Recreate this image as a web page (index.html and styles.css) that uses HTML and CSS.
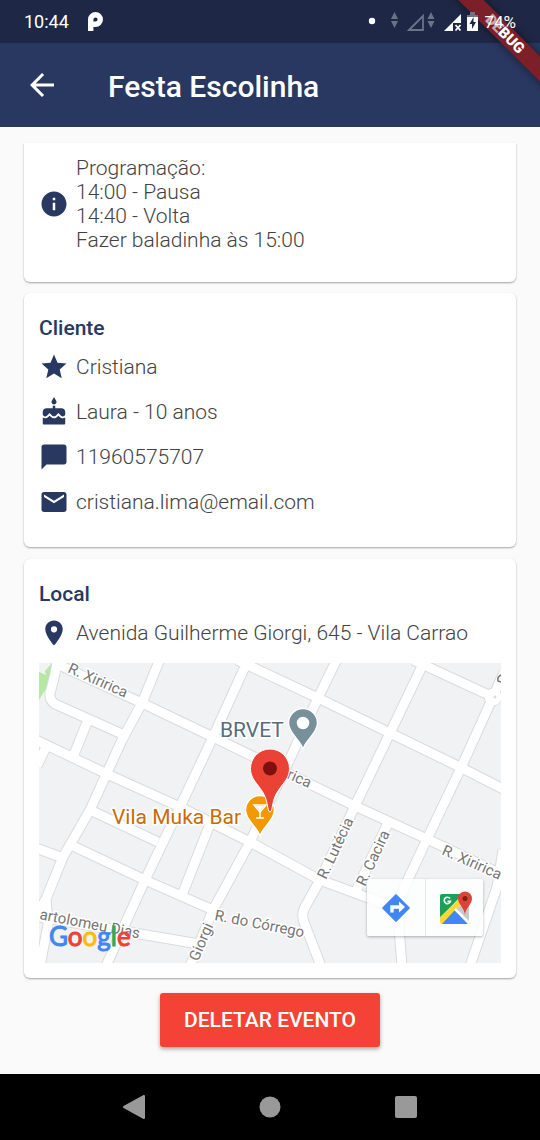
FILE: index.html
```html
<!DOCTYPE html>
<html lang="pt-BR">
<head>
<meta charset="utf-8">
<meta name="viewport" content="width=device-width, initial-scale=1">
<title>Festa Escolinha</title>
<link rel="stylesheet" href="styles.css">
</head>
<body>
<div class="debug-banner"><span class="debug-label"><span class="debug-dim">DE</span>BUG</span></div>
<div class="status-bar">
  <span class="clock">10:44</span>
  <svg class="app-glyph" width="15" height="19" viewBox="0 0 15 19"><path d="M2.700 19V7.500A4.800 4.800 0 1 1 7.500 12.300H5" fill="none" stroke="#fff" stroke-width="5.400"/></svg>
  <span class="status-icons">
    <svg width="110" height="20" viewBox="0 0 110 20">
      <circle cx="4" cy="9" r="3.200" fill="#fff"/>
      <g fill="#6b7389"><path d="M26.500 0l3.500 7h-7zM26.500 16l3.500-7h-7zM63 0l3.500 7h-7zM63 16l3.500-7h-7z"/></g>
      <path d="M41 18L55 4v14z" fill="none" stroke="#6b7389" stroke-width="1.800"/>
      <path d="M76 19L93 2v9h-8v8z" fill="#fff"/>
      <path d="M87.500 13l5 5.500M92.500 13l-5 5.500" stroke="#fff" stroke-width="1.800"/>
      <path d="M102 0h5v3h3v3H99V3h3z" fill="#6b7389"/>
      <path d="M99 5h11v14H99z" fill="#fff"/><path d="M105.500 5l-4 7h2.500v5l4-7h-2.500z" fill="#1e2846"/>
    </svg>
    <span class="battery">74%</span>
  </span>
</div>
<header class="app-bar">
  <button class="back" aria-label="Voltar"><svg width="36" height="36" viewBox="0 0 24 24"><path fill="#fff" d="M20 11H7.830l5.590-5.590L12 4l-8 8 8 8 1.410-1.410L7.830 13H20v-2z"/></svg></button>
  <h1 class="title">Festa Escolinha</h1>
</header>
<main class="content">
  <section class="card card-cut">
    <div class="row">
      <svg class="icon" viewBox="0 0 24 24"><path d="M12 2C6.480 2 2 6.480 2 12s4.480 10 10 10 10-4.480 10-10S17.520 2 12 2zm1 15h-2v-6h2v6zm0-8h-2V7h2v2z"/></svg>
      <p class="text">Programação:<br>14:00 - Pausa<br>14:40 - Volta<br>Fazer baladinha às 15:00</p>
    </div>
  </section>
  <section class="card">
    <h2 class="heading">Cliente</h2>
    <div class="row">
      <svg class="icon" viewBox="0 0 24 24"><path d="M12 17.270L18.180 21l-1.640-7.030L22 9.240l-7.190-.61L12 2 9.190 8.630 2 9.240l5.460 4.730L5.820 21z"/></svg>
      <p class="text">Cristiana</p>
    </div>
    <div class="row">
      <svg class="icon" viewBox="0 0 24 24"><path d="M12 6c1.110 0 2-.9 2-2 0-.38-.1-.73-.29-1.030L12 0l-1.710 2.970c-.19.3-.29.65-.29 1.030 0 1.100.9 2 2 2zm4.600 9.990l-1.070-1.070-1.080 1.070c-1.300 1.300-3.580 1.310-4.890 0l-1.070-1.070-1.090 1.070C6.750 16.640 5.880 17 4.960 17c-.73 0-1.400-.23-1.960-.61V21c0 .55.45 1 1 1h16c.55 0 1-.45 1-1v-4.610c-.56.38-1.230.61-1.960.61-.92 0-1.790-.36-2.440-1.010zM18 9h-5V7h-2v2H6c-1.660 0-3 1.340-3 3v1.540c0 1.080.88 1.960 1.960 1.960.52 0 1.020-.2 1.380-.57l2.140-2.130 2.130 2.130c.74.74 2.030.74 2.770 0l2.140-2.130 2.130 2.130c.37.37.86.57 1.380.57 1.080 0 1.960-.88 1.960-1.960V12C21 10.340 19.660 9 18 9z"/></svg>
      <p class="text">Laura - 10 anos</p>
    </div>
    <div class="row">
      <svg class="icon" viewBox="0 0 24 24"><path d="M20 2H4c-1.100 0-1.990.9-1.990 2L2 22l4-4h14c1.100 0 2-.9 2-2V4c0-1.100-.9-2-2-2z"/></svg>
      <p class="text">11960575707</p>
    </div>
    <div class="row">
      <svg class="icon" viewBox="0 0 24 24"><path d="M20 4H4c-1.100 0-1.990.9-1.990 2L2 18c0 1.100.9 2 2 2h16c1.100 0 2-.9 2-2V6c0-1.100-.9-2-2-2zm0 4l-8 5-8-5V6l8 5 8-5v2z"/></svg>
      <p class="text">cristiana.lima@email.com</p>
    </div>
  </section>
  <section class="card">
    <h2 class="heading">Local</h2>
    <div class="row">
      <svg class="icon" viewBox="0 0 24 24"><path d="M12 2C8.130 2 5 5.130 5 9c0 5.250 7 13 7 13s7-7.750 7-13c0-3.870-3.130-7-7-7zm0 9.500a2.500 2.500 0 0 1 0-5 2.500 2.500 0 0 1 0 5z"/></svg>
      <p class="text">Avenida Guilherme Giorgi, 645 - Vila Carrao</p>
    </div>
    <div class="map">
      <svg class="map-canvas" viewBox="0 0 462 300" preserveAspectRatio="xMidYMid slice">
        <defs>
          <g id="roads">
            <path d="M18 -3Q17 10 11 30Q10 37 16 41L83 71"/>
            <path d="M20 2L103 40L174 74L316 143L388 176L464 212"/>
            <path d="M49 57L34 94M8 82L-2 103"/>
            <path d="M-3 77L68 111L141 144L211 179L281 217L354 244"/>
            <path d="M198 -3L279 35L351 70L423 105L464 126"/>
            <path d="M374 -3L454 34L465 9"/>
            <path d="M454 34L421 107L388 176L358 240L363 303"/>
            <path d="M121 -4L103 40L83 77L51 147L24 194L7 236L-3 252M7 236L9 262L1 303"/>
            <path d="M209 -3L174 74L141 144L106 217L67 303"/>
            <path d="M298 -4L279 35L248 102L211 179L174 247L151 303"/>
            <path d="M386 -3L351 70L316 143L281 217L265 246Q262 253 266 262L282 303"/>
            <path d="M349 160L317 228M464 187L458 224L431 303"/>
            <path d="M51 147L119 179M34 183L106 217L174 247M-3 185L24 195"/>
            <path d="M171 161L143 232M1 254L101 271L160 281"/>
          </g>
        </defs>
        <rect width="462" height="300" fill="#f1f2f4"/>
        <path d="M0 9L7 12L6 8L13 0H15L11 19L0 37z" fill="#b5e8a0"/>
        <use href="#roads" class="road-edge"/>
        <circle cx="454" cy="34" r="9" fill="#fff" stroke="#dadce0"/>
        <use href="#roads" class="road-fill"/>
        <circle cx="456" cy="34" r="1.500" fill="#dadce0"/>
        <path d="M462 12Q458 14 459 18L462 19" fill="none" stroke="#757575" stroke-width="1.500"/>
        <g class="street">
          <text transform="translate(28 9) rotate(24)">R. Xiririca</text>
          <text transform="translate(402 191) rotate(24)">R. Xiririca</text>
          <text transform="translate(247 115) rotate(24)">rica</text>
          <text transform="translate(287 217) rotate(-65)">R. Lutécia</text>
          <text transform="translate(326 224) rotate(-65)">R. Cacira</text>
          <text transform="translate(159 299) rotate(-67)">Giorgi</text>
          <text transform="translate(175 257) rotate(11)">R. do Córrego</text>
          <text transform="translate(0 256) rotate(11)">artolomeu Dias</text>
        </g>
        <text class="place place-vet" x="181" y="74">BRVET</text>
        <text class="place place-bar" x="73" y="161">Vila Muka Bar</text>
        <g stroke="#fff" stroke-width="1.500">
          <path d="M264 86.500C262 77 249.500 71 249.500 60a14.500 14.500 0 0 1 29 0C278.500 71 266 77 264 86.500z" fill="#78909c"/>
          <circle cx="264" cy="60" r="5.500" fill="#fff"/>
          <path d="M221 173.500C219 164 206.500 158 206.500 147a14.500 14.500 0 0 1 29 0C235.500 158 223 164 221 173.500z" fill="#f29900"/>
        </g>
        <path d="M215 142h12l-6 7zM221 148v7M217 155h8" fill="none" stroke="#fff" stroke-width="1.500"/>
        <path d="M217 143h8l-4 5z" fill="#fff"/>
        <path d="M231 149C228 149 229.500 137 223 128C217 119 211.500 115 211.500 105.500a19.500 19.500 0 0 1 39 0C250.500 115 245 119 239 128C232.500 137 234 149 231 149z" fill="#ea4335" stroke="#fff"/>
        <circle cx="231" cy="105.500" r="7" fill="#7f1010"/>
        <text class="google" x="10" y="283"><tspan class="g-blue">G</tspan><tspan class="g-red">o</tspan><tspan class="g-yellow">o</tspan><tspan class="g-blue">g</tspan><tspan class="g-green">l</tspan><tspan class="g-red">e</tspan></text>
      </svg>
      <div class="map-tools">
        <button class="tool" aria-label="Rotas"><svg width="32" height="32" viewBox="0 0 32 32"><rect x="6" y="6" width="20" height="20" rx="1" transform="rotate(45 16 16)" fill="#4285f4"/><path d="M12 20.500V15H20" fill="none" stroke="#fff" stroke-width="3.400"/><path d="M19 9.500L25 15L19 20.500z" fill="#fff"/></svg></button>
        <button class="tool" aria-label="Abrir no Google Maps"><svg width="34" height="34" viewBox="0 0 34 34">
          <path d="M4 3H25L2 27V5Q2 3 4 3z" fill="#1ea05a"/><path d="M18 18L31 8V31z" fill="#c8cacd"/><path d="M2 26L21 8L24 12L5 33Q2 33 2 30z" fill="#fdd835"/><path d="M4 33L17 19L30 33z" fill="#4285f4"/><path d="M17 18L31 32" stroke="#fff" stroke-width="2.500"/>
          <path d="M12 7.500A3.200 3.200 0 1 0 12.500 10.300H9.500" fill="none" stroke="#fff" stroke-width="1.600"/>
          <path d="M27 24C26.500 17 20 13 20 7.500a7 7 0 0 1 14 0C34 13 27.500 17 27 24z" fill="#db4437"/><circle cx="27" cy="7.500" r="2.500" fill="#7f1d18"/>
        </svg></button>
      </div>
    </div>
  </section>
  <button class="delete">DELETAR EVENTO</button>
</main>
<nav class="nav-bar">
  <button class="nav-button" aria-label="Voltar"><svg width="24" height="26" viewBox="0 0 24 26"><path d="M2 13L22 2V24z" fill="#999" stroke="#999" stroke-width="2" stroke-linejoin="round"/></svg></button>
  <button class="nav-button" aria-label="Início"><svg width="24" height="24" viewBox="0 0 24 24"><circle cx="12" cy="12" r="10.500" fill="#999"/></svg></button>
  <button class="nav-button" aria-label="Recentes"><svg width="24" height="24" viewBox="0 0 24 24"><rect x="1" y="1" width="22" height="22" rx="2" fill="#999"/></svg></button>
</nav>
</body>
</html>
```

FILE: styles.css
```css
* { box-sizing: border-box; }
body {
  margin: 0;
  min-height: 100vh;
  display: flex;
  flex-direction: column;
  position: relative;
  overflow-x: hidden;
  background: #fafafa;
  font-family: Roboto, sans-serif;
}
h1, h2, p { margin: 0; }
button { border: 0; padding: 0; background: none; font-family: inherit; }
svg { display: block; }

.status-bar {
  height: 43px;
  padding: 0 24px;
  display: flex;
  align-items: center;
  background: #1e2846;
  color: #fff;
}
.clock { font-size: 18px; line-height: 24px; }
.app-glyph { margin-left: 19px; }
.status-icons {
  display: flex;
  align-items: center;
  gap: 6px;
  margin-left: auto;
  position: relative;
  z-index: 3;
}
.battery { font-size: 17px; line-height: 24px; }

.debug-banner {
  position: absolute;
  z-index: 2;
  top: 0;
  right: 0;
  width: 92px;
  height: 92px;
  overflow: hidden;
  pointer-events: none;
}
.debug-label {
  position: absolute;
  top: 25px;
  right: -45px;
  width: 160px;
  transform: rotate(45deg);
  background: #7d1f29;
  box-shadow: 0 0 8px rgba(0, 0, 0, .5);
  color: #fff;
  font-size: 15px;
  line-height: 18px;
  font-weight: 900;
  text-align: center;
}
.debug-dim { color: #c9a9b0; }

.app-bar {
  height: 84px;
  padding: 0 24px;
  display: flex;
  align-items: center;
  gap: 48px;
  background: #283861;
}
.title { padding-top: 3px; color: #fff; font-size: 30px; line-height: 36px; font-weight: 500; }

.content {
  flex: 1;
  padding: 16px 24px 24px;
  display: flex;
  flex-direction: column;
}
.card {
  margin-bottom: 12px;
  padding: 23px 15px 15px;
  border-radius: 6px;
  background: #fff;
  box-shadow: 0 1px 2px rgba(0, 0, 0, .35);
}
.card-cut {
  margin-bottom: 11px;
  padding-top: 13px;
  border-radius: 0 0 6px 6px;
}
.heading {
  margin-bottom: 12px;
  color: #283861;
  font-size: 21px;
  line-height: 24px;
  font-weight: 500;
}
.row {
  display: flex;
  align-items: center;
  gap: 7px;
  min-height: 30px;
  margin-bottom: 15px;
}
.icon { flex: none; width: 30px; height: 30px; fill: #283861; }
.text { color: #424242; font-size: 21px; line-height: 24px; font-weight: 300; }

.map { position: relative; }
.map-canvas { width: 100%; height: 300px; }
.road-edge { fill: none; stroke: #d9dbde; stroke-width: 11px; stroke-linejoin: round; }
.road-fill { fill: none; stroke: #fff; stroke-width: 9px; stroke-linejoin: round; }
.street {
  font-size: 15px;
  fill: #757575;
  stroke: #fff;
  stroke-width: 3px;
  paint-order: stroke;
}
.place { font-size: 21px; stroke: #fff; stroke-width: 3px; paint-order: stroke; }
.place-vet { fill: #546e7a; }
.place-bar { fill: #c96c05; }
.google { font-family: Lato, sans-serif; font-size: 26px; stroke-width: 1px; }
.g-blue { fill: #4285f4; stroke: #4285f4; }
.g-red { fill: #ea4335; stroke: #ea4335; }
.g-yellow { fill: #fbbc05; stroke: #fbbc05; }
.g-green { fill: #34a853; stroke: #34a853; }
.map-tools {
  position: absolute;
  right: 18px;
  bottom: 27px;
  display: flex;
  border-radius: 2px;
  background: rgba(255, 255, 255, .8);
  box-shadow: 0 1px 3px rgba(0, 0, 0, .3);
}
.tool { display: grid; place-items: center; width: 58px; height: 57px; }
.tool + .tool { border-left: 1px solid #e4e4e4; }

.delete {
  align-self: center;
  height: 54px;
  margin-top: 3px;
  padding: 0 24px;
  border-radius: 3px;
  background: #f44336;
  box-shadow: 0 2px 4px rgba(0, 0, 0, .35);
  color: #fff;
  font-size: 21px;
  line-height: 24px;
  font-weight: 500;
}

.nav-bar {
  height: 66px;
  padding: 0 66px;
  display: flex;
  align-items: center;
  background: #000;
}
.nav-button { flex: 1; height: 66px; display: grid; place-items: center; }
```
